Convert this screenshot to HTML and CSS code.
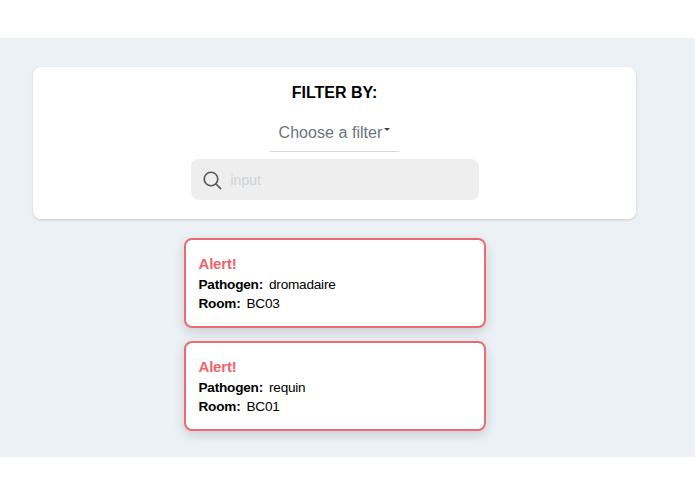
FILE: index.html
```html
<!DOCTYPE html>
<html lang="en">
<head>
    <meta charset="UTF-8">
    <meta name="viewport" content="width=device-width, initial-scale=1.0">
    <title>Alerts</title>
    <link rel="stylesheet" href="styles.css">
</head>
<body>
    <main class="content">
        <section class="filter-panel">
            <h1 class="filter-title">FILTER BY:</h1>
            <div class="filter-select">
                <span>Choose a filter</span>
                <span class="caret"></span>
            </div>
            <div class="search-box">
                <svg class="search-icon" width="20" height="20" viewBox="0 0 20 20" fill="none" stroke="#555" stroke-width="1.6" stroke-linecap="round">
                    <circle cx="9" cy="9" r="6.8"/>
                    <path d="M14 14l4.6 4.6"/>
                </svg>
                <input class="search-input" type="text" placeholder="input">
            </div>
        </section>

        <section class="alert-list">
            <div class="alert-card">
                <div class="alert-title">Alert!</div>
                <div class="alert-row"><strong>Pathogen:</strong><span>dromadaire</span></div>
                <div class="alert-row"><strong>Room:</strong><span>BC03</span></div>
            </div>
            <div class="alert-card">
                <div class="alert-title">Alert!</div>
                <div class="alert-row"><strong>Pathogen:</strong><span>requin</span></div>
                <div class="alert-row"><strong>Room:</strong><span>BC01</span></div>
            </div>
        </section>
    </main>
</body>
</html>
```

FILE: styles.css
```css
body {
    margin: 0;
    height: 494px;
    overflow: hidden;
    background-color: #ffffff;
    font-family: "Liberation Sans", Arial, sans-serif;
    color: #000000;
}
.content {
    margin-top: 38px;
    height: 419px;
    box-sizing: border-box;
    padding: 29px 59px 0 33px;
    background-color: #ecf1f5;
}
.filter-panel {
    display: flex;
    flex-direction: column;
    align-items: center;
    height: 152px;
    box-sizing: border-box;
    padding-top: 16px;
    background-color: #ffffff;
    border-radius: 8px;
    box-shadow: 0 1px 3px rgba(0, 0, 0, 0.15);
}
.filter-title {
    margin: 0;
    font-size: 16px;
    line-height: 20px;
    font-weight: bold;
}
.filter-select {
    display: flex;
    justify-content: center;
    width: 129px;
    height: 35px;
    box-sizing: border-box;
    margin-top: 14px;
    padding-top: 6px;
    border-bottom: 1px solid #d5d8dc;
    font-size: 16px;
    letter-spacing: 0.05px;
    line-height: 20px;
    color: #6c757d;
}
.caret {
    width: 0;
    height: 0;
    margin: 5px 0 0 2px;
    border-top: 3px solid #444;
    border-left: 3px solid transparent;
    border-right: 3px solid transparent;
}
.search-box {
    display: flex;
    align-items: center;
    gap: 9px;
    width: 288px;
    height: 41px;
    box-sizing: border-box;
    margin-top: 7px;
    padding-left: 11px;
    background-color: #eeeeee;
    border-radius: 8px;
}
.search-input {
    flex: 1;
    min-width: 0;
    border: none;
    outline: none;
    padding: 0;
    background: transparent;
    font-family: inherit;
    font-size: 14px;
}
.search-input::placeholder {
    color: #cdd2d9;
}
.alert-list {
    display: flex;
    flex-direction: column;
    align-items: center;
    gap: 13px;
    margin-top: 19px;
}
.alert-card {
    width: 302px;
    height: 90px;
    box-sizing: border-box;
    padding: 15px 13px 0;
    background-color: #ffffff;
    border: 2px solid #ea6b70;
    border-radius: 8px;
    box-shadow: 0 4px 12px rgba(0, 0, 0, 0.15);
}
.alert-title {
    margin-bottom: 3px;
    font-size: 15px;
    line-height: 18px;
    font-weight: bold;
    letter-spacing: -0.2px;
    color: #f0626a;
}
.alert-row {
    display: flex;
    gap: 6px;
    margin-top: 1px;
    font-size: 13.6px;
    line-height: 18px;
    letter-spacing: -0.22px;
}
```
